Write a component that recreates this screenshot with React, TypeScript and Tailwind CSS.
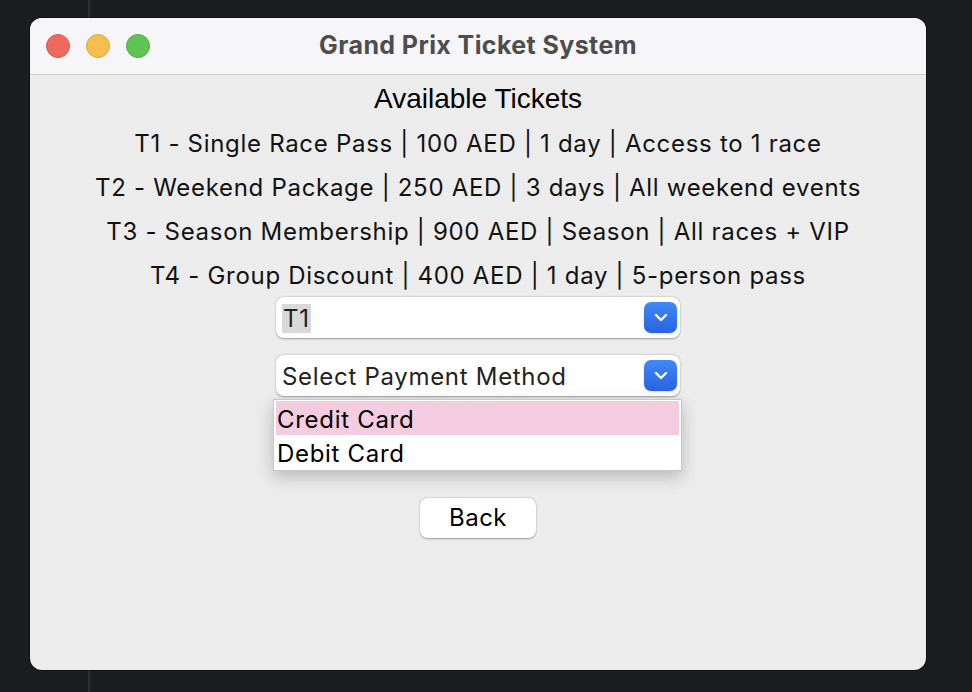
import React from 'react';

const tickets = [
  'T1 - Single Race Pass | 100 AED | 1 day | Access to 1 race',
  'T2 - Weekend Package | 250 AED | 3 days | All weekend events',
  'T3 - Season Membership | 900 AED | Season | All races + VIP',
  'T4 - Group Discount | 400 AED | 1 day | 5-person pass',
];

const Chevron = () => (
  <div className="w-[33px] h-[31px] rounded-[7px] bg-gradient-to-b from-[#4188f5] to-[#2b62e2] flex items-center justify-center shadow-sm">
    <svg width="14" height="9" viewBox="0 0 14 9" fill="none">
      <path d="M2 2l5 5 5-5" stroke="white" strokeWidth="2.4" strokeLinecap="round" strokeLinejoin="round" />
    </svg>
  </div>
);

const Combo: React.FC<{ label: React.ReactNode }> = ({ label }) => (
  <div className="w-[404px] h-[41px] bg-white rounded-[8px] shadow-[0_0.5px_2px_rgba(0,0,0,0.35)] flex items-center justify-between pl-[6px] pr-[3px]">
    <div className="text-[24px] tracking-[0.7px] text-[#222] pt-[2px]">{label}</div>
    <Chevron />
  </div>
);

export default function App() {
  return (
    <div className="w-[972px] h-[692px] bg-[#1c1d21] relative overflow-hidden" style={{ fontFamily: 'Inter, "Liberation Sans", sans-serif' }}>
      {/* background editor gutter line */}
      <div className="absolute left-[88px] top-0 bottom-0 w-[2px] bg-[#2d2e32]" />

      <div className="absolute left-[30px] top-[18px] w-[896px] h-[652px] rounded-[12px] overflow-hidden bg-[#ececec] flex flex-col shadow-[0_0_0_1px_rgba(0,0,0,0.4)]">
        {/* Title bar */}
        <div className="h-[57px] shrink-0 bg-[#f6f5f8] border-b border-[#d0cfd2] relative flex items-center justify-center">
          <div className="absolute left-[16px] top-[16px] flex gap-[16px]">
            <div className="w-[24px] h-[24px] rounded-full bg-[#ee6a5f] border border-[#d95a50]" />
            <div className="w-[24px] h-[24px] rounded-full bg-[#f5bf4f] border border-[#dea73e]" />
            <div className="w-[24px] h-[24px] rounded-full bg-[#5fc454] border border-[#4ead43]" />
          </div>
          <div className="text-[25px] font-bold text-[#4d4d4d] tracking-[0.4px] -mt-[1px]">Grand Prix Ticket System</div>
        </div>

        {/* Content */}
        <div className="flex flex-col items-center relative">
          <div className="text-[28px] leading-[46px] text-black mt-[1px]" style={{ fontFamily: '"Liberation Sans", Arial, sans-serif' }}>
            Available Tickets
          </div>
          {tickets.map((t) => (
            <div key={t} className="text-[24px] tracking-[0.7px] leading-[44px] text-[#111]">
              {t}
            </div>
          ))}
          <div className="-mt-[1px]">
            <Combo label={<span className="bg-[#d9d9d9] px-[1px]">T1</span>} />
          </div>
          <div className="mt-[17px] relative">
            <Combo label="Select Payment Method" />
            {/* open popup list */}
            <div className="absolute left-[-3px] top-[44px] w-[409px] bg-white border border-[#c8c8c8] shadow-[0_6px_16px_rgba(0,0,0,0.22)] py-[1px] z-10">
              <div className="h-[34px] mx-[2px] bg-[#f4cce0] flex items-center px-[1px] pt-[3px] text-[24px] tracking-[0.7px] text-black">Credit Card</div>
              <div className="h-[34px] mx-[2px] flex items-center px-[1px] pt-[3px] text-[24px] tracking-[0.7px] text-black">Debit Card</div>
            </div>
          </div>
          <div className="mt-[102px] w-[116px] h-[40px] bg-white rounded-[8px] shadow-[0_0.5px_2px_rgba(0,0,0,0.35)] flex items-center justify-center text-[24px] tracking-[0.5px] text-black">
            Back
          </div>
        </div>
      </div>
    </div>
  );
}
